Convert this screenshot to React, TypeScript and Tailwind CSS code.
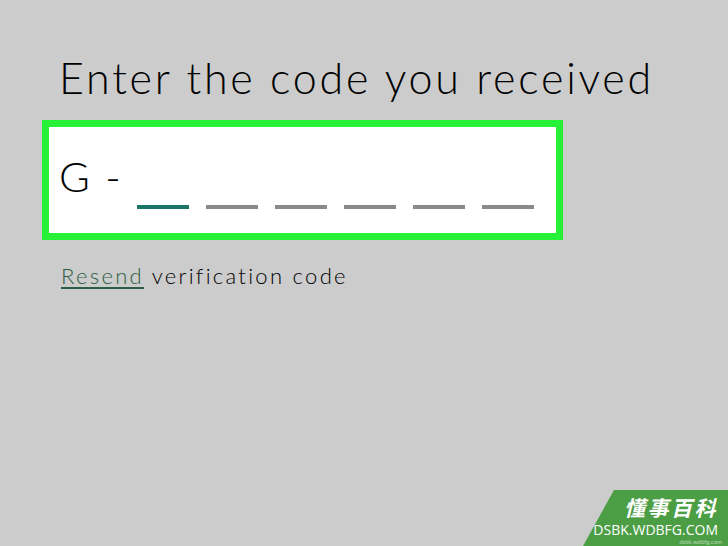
const slots = [true, false, false, false, false, false];

const App = () => {
  return (
    <div
      className="relative w-[728px] h-[546px] overflow-hidden bg-[#cccccc]"
      style={{ fontFamily: '"Lato", "Open Sans", sans-serif' }}
    >
      <div className="pt-[52px] pl-[42px]">
        <h1 className="pl-[17px] text-[43px] leading-[52px] font-light tracking-[2.8px] text-black">
          Enter the code you received
        </h1>

        {/* code entry box */}
        <div className="mt-[16px] w-[521px] h-[120px] border-[7px] border-[#27f136] bg-white flex items-start pl-[10px] pt-[24px]">
          <span className="text-[42px] leading-[50px] font-light tracking-[2px] text-black">G -</span>
          <div className="flex gap-[17px] ml-[14px] mt-[54px]">
            {slots.map((active, i) => (
              <div
                key={i}
                className={
                  active
                    ? 'w-[52px] h-[4px] bg-[#1d7565]'
                    : 'w-[52px] h-[4px] bg-[#8a8a8a]'
                }
              />
            ))}
          </div>
        </div>

        <p className="mt-[22px] pl-[19px] text-[22px] leading-[28px] font-light tracking-[2.3px] text-black">
          <a className="text-[#2e5e45] underline underline-offset-[3px]" href="#">
            Resend
          </a>{' '}
          verification code
        </p>
      </div>

      {/* watermark */}
      <div className="absolute right-0 bottom-0 w-[145px] h-[56px] flex flex-col items-end pr-[10px] pt-[2px]">
        <svg className="absolute inset-0" width="145" height="56" viewBox="0 0 145 56">
          <polygon points="31,0 145,0 145,56 0,56" fill="#4c9e45" />
        </svg>
        <div
          className="relative text-[21px] leading-[30px] italic font-bold tracking-[2.5px] text-white"
          style={{ fontFamily: '"Noto Sans CJK SC", sans-serif' }}
        >
          懂事百科
        </div>
        <div
          className="relative text-[14px] leading-[16px] text-white"
          style={{ fontFamily: '"Open Sans", sans-serif' }}
        >
          DSBK.WDBFG.COM
        </div>
        <div className="relative -mr-[4px] text-[6px] leading-[8px] text-[#b9d9b6]">
          dsbk.wdbfg.com
        </div>
      </div>
    </div>
  );
};

export default App;
